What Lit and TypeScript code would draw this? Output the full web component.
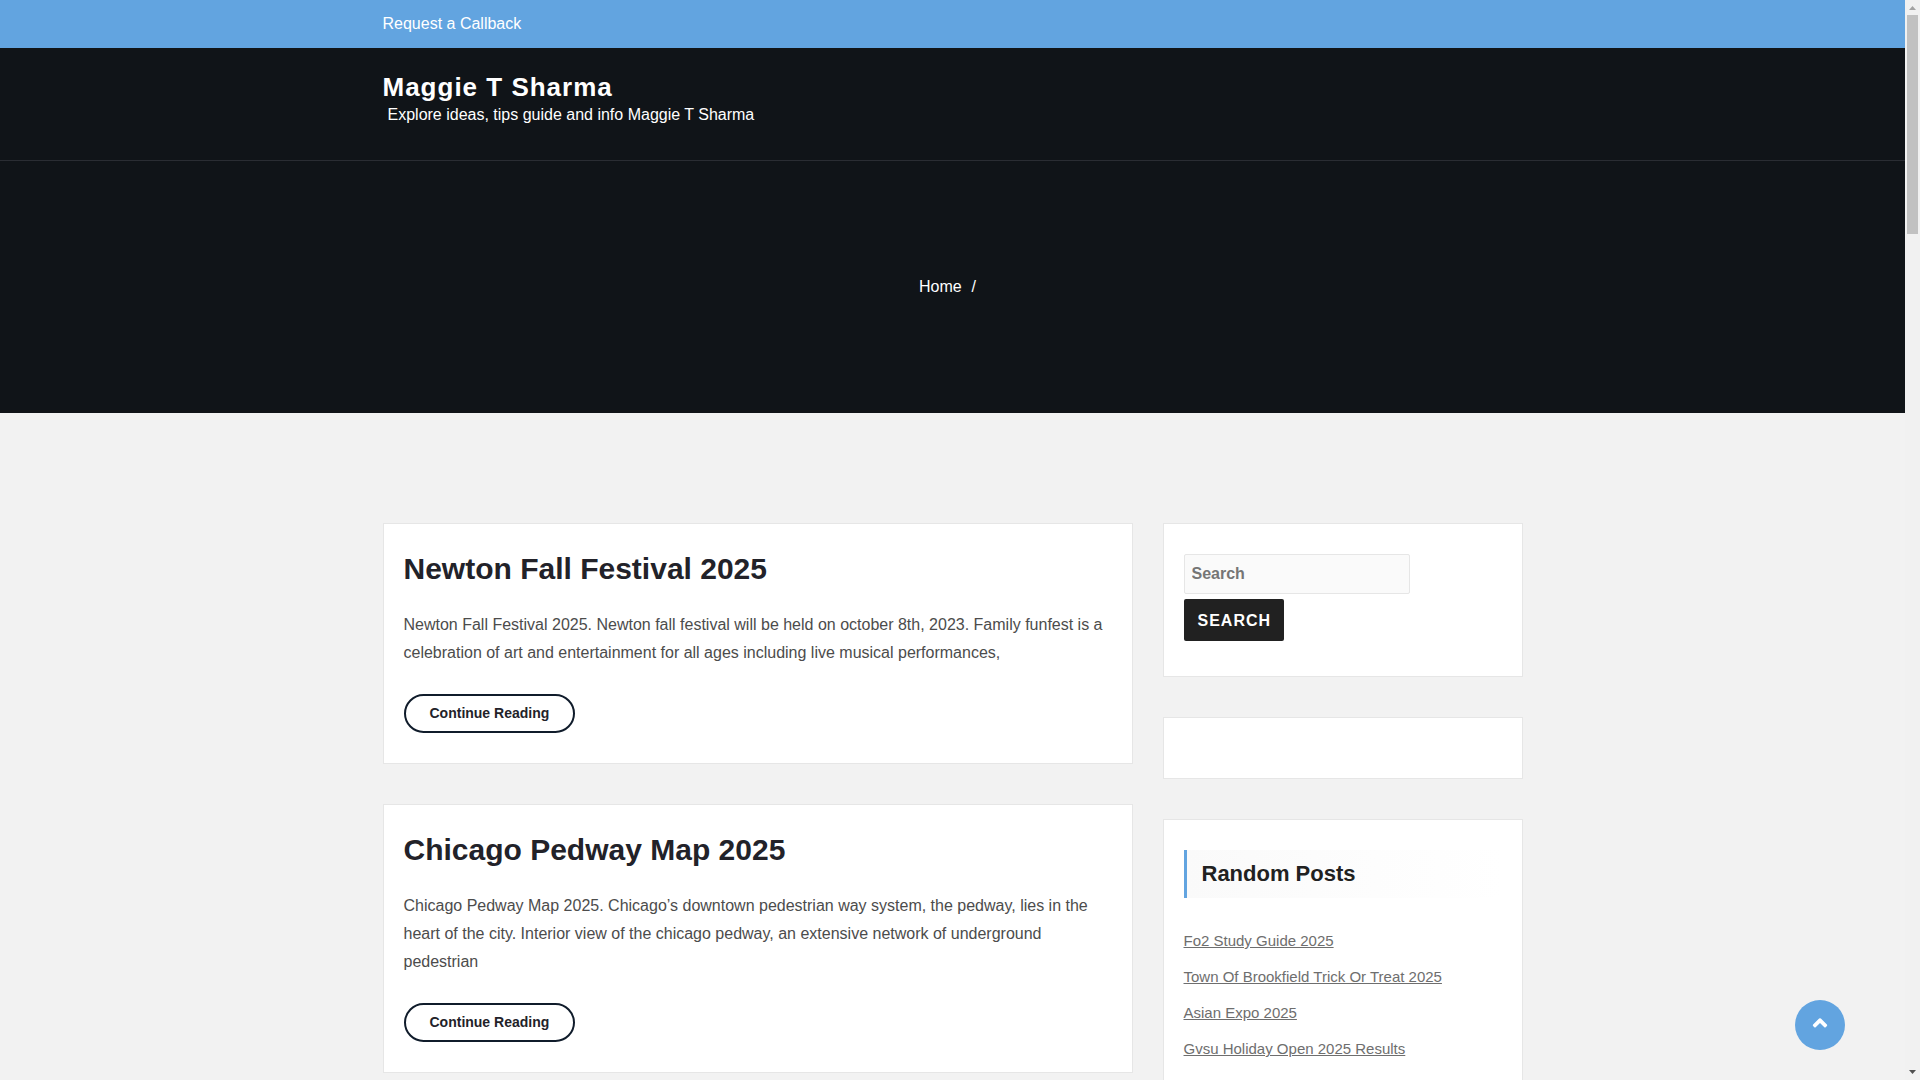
import { LitElement, html, css } from "lit";
import { customElement } from "lit/decorators.js";

interface Post {
  title: string;
  excerpt: string;
}

const POSTS: Post[] = [
  {
    title: "Newton Fall Festival 2025",
    excerpt:
      "Newton Fall Festival 2025. Newton fall festival will be held on october 8th, 2023. Family funfest is a celebration of art and entertainment for all ages including live musical performances,",
  },
  {
    title: "Chicago Pedway Map 2025",
    excerpt:
      "Chicago Pedway Map 2025. Chicago’s downtown pedestrian way system, the pedway, lies in the heart of the city. Interior view of the chicago pedway, an extensive network of underground pedestrian",
  },
];

const RANDOM_POSTS = [
  "Fo2 Study Guide 2025",
  "Town Of Brookfield Trick Or Treat 2025",
  "Asian Expo 2025",
  "Gvsu Holiday Open 2025 Results",
];

@customElement("app-root")
export class AppRoot extends LitElement {
  static styles = css`
    :host {
      display: flex;
      height: 100vh;
      overflow: hidden;
      background: #f2f2f2;
      color: #4c4c4c;
      font: 16px/28px "Liberation Sans", Arial, sans-serif;
    }
    * {
      box-sizing: border-box;
    }
    a {
      color: inherit;
      text-decoration: none;
    }
    h1, h2, h3, p, ul, ol {
      margin: 0;
      padding: 0;
    }
    ul, ol {
      list-style: none;
    }
    .page {
      flex: 1;
      min-width: 0;
      overflow-y: auto;
      scrollbar-width: none;
    }
    .container {
      max-width: 1170px;
      margin: 0 auto;
      padding: 0 15px;
    }
    .topbar {
      padding: 10px 0;
      background: #62a4e0;
      color: #fff;
    }
    .header {
      padding: 24px 0 32px;
      background: #101418;
      border-bottom: 1px solid #2a2d33;
      color: #fff;
    }
    .site-title {
      font-size: 26px;
      line-height: 30px;
      letter-spacing: 1px;
    }
    .tagline {
      padding-left: 5px;
      line-height: 26px;
    }
    .hero {
      padding: 112px 0;
      background: #101418;
      color: #fff;
    }
    .crumbs {
      display: flex;
      justify-content: center;
      gap: 10px;
      padding-right: 10px;
    }
    .columns {
      display: grid;
      grid-template-columns: minmax(0, 1fr) 360px;
      gap: 30px;
      padding-top: 110px;
    }
    .stack {
      display: flex;
      flex-direction: column;
      gap: 40px;
    }
    .card {
      padding: 30px 20px;
      background: #fff;
      border: 1px solid #e6e6e6;
    }
    .post {
      display: flex;
      flex-direction: column;
      align-items: flex-start;
      gap: 27px;
    }
    .post-title {
      color: #222229;
      font-size: 30px;
      line-height: 30px;
    }
    .more {
      padding: 0 24px;
      border: 2px solid #101c2b;
      border-radius: 20px;
      color: #222229;
      font-size: 14px;
      font-weight: 700;
      line-height: 35px;
    }
    .search {
      display: flex;
      flex-direction: column;
      align-items: flex-start;
      gap: 5px;
      padding-bottom: 5px;
    }
    .search-input {
      width: 226px;
      max-width: 100%;
      height: 40px;
      padding: 0 7px;
      border: 1px solid #e6e6e6;
      border-radius: 2px;
      background: #fafafa;
      color: #4c4c4c;
      font: inherit;
      font-weight: 700;
    }
    .search-input::placeholder {
      color: #757575;
    }
    .search-button {
      height: 42px;
      padding: 2px 13px 0 14px;
      border: 0;
      border-radius: 2px;
      background: #212121;
      color: #fff;
      font: inherit;
      font-weight: 700;
      letter-spacing: 1px;
      text-transform: uppercase;
    }
    .widget-title {
      padding-left: 15px;
      border-left: 3px solid #62a4e0;
      background: linear-gradient(90deg, #fafafa, #fff);
      color: #212121;
      font-size: 22px;
      line-height: 48px;
    }
    .links {
      padding-top: 25px;
      color: #6e6e6e;
      font-size: 15px;
      line-height: 36px;
    }
    .links a {
      text-decoration: underline;
    }
    .to-top {
      position: fixed;
      right: 75px;
      bottom: 30px;
      display: flex;
      align-items: center;
      justify-content: center;
      width: 50px;
      height: 50px;
      padding: 0 0 4px;
      border: 0;
      border-radius: 50%;
      background: #62a4e0;
    }
    .scrollbar {
      display: flex;
      flex-direction: column;
      align-items: center;
      width: 15px;
      background: #f1f1f1;
    }
    .track {
      flex: 1;
      width: 11px;
    }
    .thumb {
      height: 219px;
      background: #c1c1c1;
    }
    svg {
      display: block;
    }
  `;

  render() {
    return html`
      <div class="page">
        <div class="topbar">
          <div class="container"><a href="#">Request a Callback</a></div>
        </div>
        <header class="header">
          <div class="container">
            <h1 class="site-title"><a href="#">Maggie T Sharma</a></h1>
            <p class="tagline">Explore ideas, tips guide and info Maggie T Sharma</p>
          </div>
        </header>
        <nav class="hero" aria-label="Breadcrumb">
          <ol class="crumbs">
            <li><a href="#">Home</a></li>
            <li>/</li>
          </ol>
        </nav>
        <div class="container">
          <div class="columns">
            <main class="stack">
              ${POSTS.map(
                (post) => html`
                  <article class="card post">
                    <h2 class="post-title"><a href="#">${post.title}</a></h2>
                    <p>${post.excerpt}</p>
                    <a class="more" href="#">Continue Reading</a>
                  </article>
                `
              )}
            </main>
            <aside class="stack">
              <section class="card">
                <form class="search" role="search" @submit=${(e: Event) => e.preventDefault()}>
                  <input class="search-input" type="search" placeholder="Search" aria-label="Search" />
                  <button class="search-button" type="submit">Search</button>
                </form>
              </section>
              <section class="card"></section>
              <section class="card">
                <h3 class="widget-title">Random Posts</h3>
                <ul class="links">
                  ${RANDOM_POSTS.map((t) => html`<li><a href="#">${t}</a></li>`)}
                </ul>
              </section>
            </aside>
          </div>
        </div>
      </div>
      <button class="to-top" type="button" aria-label="Back to top" @click=${this.toTop}>
        <svg width="16" height="12" viewBox="0 0 16 12" fill="#fff">
          <path d="M7.1 1.6a1.3 1.3 0 0 1 1.8 0l6 6a1 1 0 0 1 0 1.4l-1.2 1.2a1 1 0 0 1-1.4 0L8 5.9l-4.3 4.3a1 1 0 0 1-1.4 0L1.1 9a1 1 0 0 1 0-1.4Z" />
        </svg>
      </button>
      <div class="scrollbar" aria-hidden="true">
        <svg width="15" height="15"><path d="M4 10 7.5 6 11 10Z" fill="#a3a3a3" /></svg>
        <div class="track"><div class="thumb"></div></div>
        <svg width="15" height="15"><path d="M4 5 7.5 9 11 5Z" fill="#505050" /></svg>
      </div>
    `;
  }

  private toTop() {
    this.renderRoot.querySelector(".page")?.scrollTo({ top: 0 });
  }
}
